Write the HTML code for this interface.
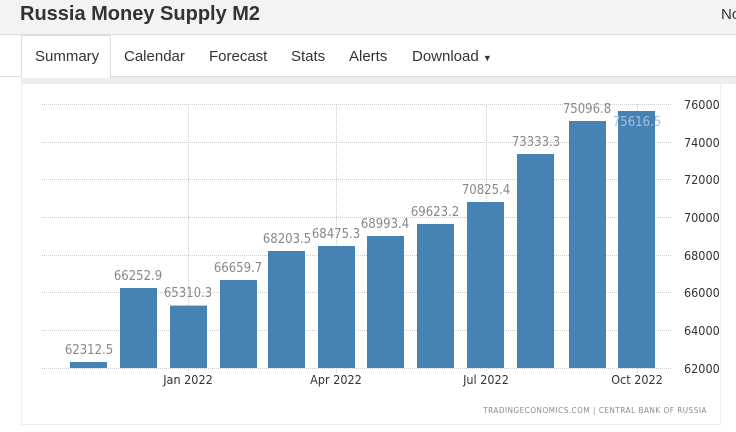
<!DOCTYPE html>
<html><head><style>
body{margin:0;width:736px;height:432px;overflow:hidden;background:#fff;font-family:"Liberation Sans",sans-serif;position:relative}
.hdr{position:absolute;left:0;top:0;width:736px;height:34px;background:#f3f3f3;border-bottom:1px solid #ddd}
.title{position:absolute;left:20px;top:3px;font-size:20px;font-weight:bold;color:#333}
.no{position:absolute;left:721px;top:6px;font-size:15px;color:#333}
.tabs{position:absolute;left:0;top:35px;width:736px;height:41px;border-bottom:1px solid #ddd}
.tab{position:absolute;top:12px;font-size:15px;color:#333}
.act{position:absolute;left:21px;top:35px;width:88px;height:42px;border:1px solid #ddd;border-bottom:none;background:#fff}
.strip{position:absolute;left:21px;top:77px;width:715px;height:7px;background:#eee}
.panel{position:absolute;left:21px;top:84px;width:698px;height:340px;border:1px solid #eee;border-top:none}
svg{position:absolute;left:0;top:0}
</style></head><body>
<div class="hdr"><div class="title">Russia Money Supply M2</div><div class="no">No</div></div>
<div class="tabs"></div>
<div class="strip"></div>
<div class="act"></div>
<div class="tab" style="left:35px;top:48px">Summary</div>
<div class="tab" style="left:124px;top:48px">Calendar</div>
<div class="tab" style="left:209px;top:48px">Forecast</div>
<div class="tab" style="left:291px;top:48px">Stats</div>
<div class="tab" style="left:349px;top:48px">Alerts</div>
<div class="tab" style="left:412px;top:48px">Download <span style="font-size:9px">▼</span></div>
<div class="panel"></div>
<svg width="736" height="432" font-family="'DejaVu Sans Condensed','DejaVu Sans',sans-serif">
<g stroke="#ccc" stroke-dasharray="1,1" stroke-width="1">
<line x1="42" x2="672" y1="104.5" y2="104.5"/><line x1="42" x2="672" y1="142.5" y2="142.5"/>
<line x1="42" x2="672" y1="179.5" y2="179.5"/><line x1="42" x2="672" y1="217.5" y2="217.5"/>
<line x1="42" x2="672" y1="255.5" y2="255.5"/><line x1="42" x2="672" y1="292.5" y2="292.5"/>
<line x1="42" x2="672" y1="330.5" y2="330.5"/><line x1="42" x2="672" y1="368.5" y2="368.5"/>
<line x1="188.5" x2="188.5" y1="104" y2="374"/><line x1="336.5" x2="336.5" y1="104" y2="374"/>
<line x1="486.5" x2="486.5" y1="104" y2="374"/><line x1="637.5" x2="637.5" y1="104" y2="374"/>
</g>
<g fill="#4682b4">
<rect x="70" y="362" width="37" height="6"/><rect x="120" y="288" width="37" height="80"/>
<rect x="170" y="305.6" width="37" height="62.4"/><rect x="220" y="280" width="37" height="88"/>
<rect x="268" y="251" width="37" height="117"/><rect x="318" y="246" width="37" height="122"/>
<rect x="367" y="236" width="37" height="132"/><rect x="417" y="224" width="37" height="144"/>
<rect x="467" y="202" width="37" height="166"/><rect x="517" y="154" width="37" height="214"/>
<rect x="569" y="121" width="37" height="247"/><rect x="618" y="111" width="37" height="257"/>
</g>
<g fill="#888" font-size="13" text-anchor="middle">
<text x="89" y="354">62312.5</text><text x="138" y="280">66252.9</text>
<text x="188" y="297">65310.3</text><text x="238" y="272">66659.7</text>
<text x="287" y="243">68203.5</text><text x="336" y="238">68475.3</text>
<text x="385" y="228">68993.4</text><text x="435" y="216">69623.2</text>
<text x="486" y="194">70825.4</text><text x="536" y="146">73333.3</text>
<text x="587" y="113">75096.8</text><text x="637" y="126" fill="#a9bfd6">75616.5</text>
</g>
<g fill="#333" font-size="12.5">
<text x="684" y="109">76000</text><text x="684" y="147">74000</text><text x="684" y="184">72000</text>
<text x="684" y="222">70000</text><text x="684" y="260">68000</text><text x="684" y="297">66000</text>
<text x="684" y="335">64000</text><text x="684" y="373">62000</text>
</g>
<g fill="#333" font-size="12.5" text-anchor="middle">
<text x="188" y="384">Jan 2022</text><text x="336" y="384">Apr 2022</text>
<text x="486" y="384">Jul 2022</text><text x="637" y="384">Oct 2022</text>
</g>
<text x="707" y="413" text-anchor="end" font-size="8" fill="#888" letter-spacing="0.55">TRADINGECONOMICS.COM  |  CENTRAL BANK OF RUSSIA</text>
</svg>
</body></html>
